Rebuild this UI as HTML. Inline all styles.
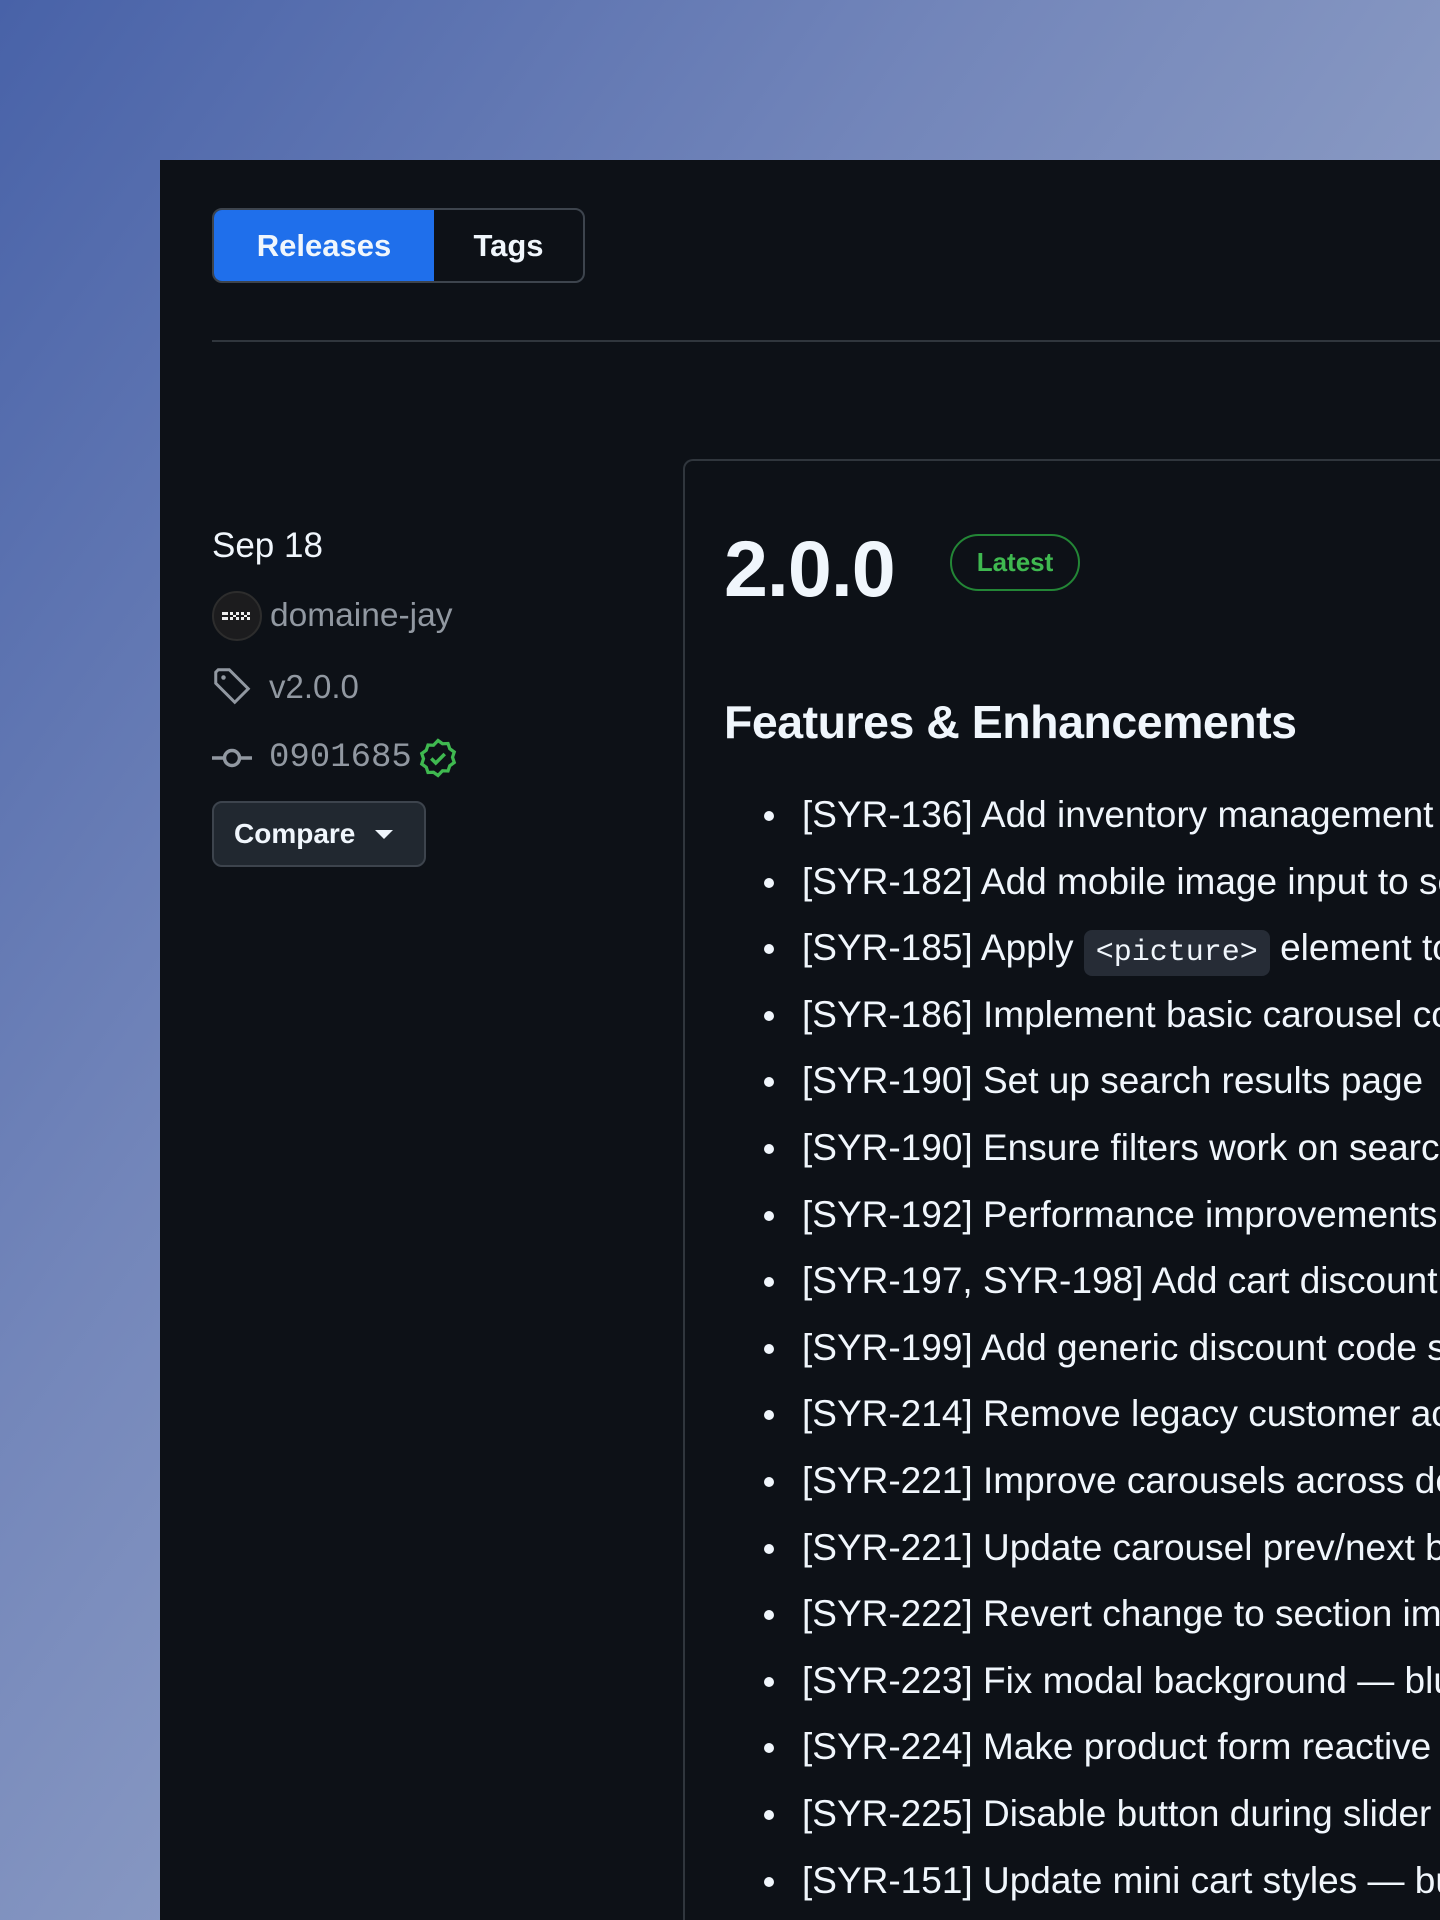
<!DOCTYPE html>
<html><head><meta charset="utf-8"><style>
*{margin:0;padding:0;box-sizing:border-box}
html,body{width:1440px;height:1920px;overflow:hidden}
body{background:linear-gradient(125deg,#4862a8 0%,#7386ba 35%,#8c9cc4 60%,#a8b6cc 100%);font-family:"Liberation Sans",sans-serif;position:relative}
.panel{position:absolute;left:160px;top:160px;width:1280px;height:1760px;background:#0d1117;overflow:hidden}
.tabs{position:absolute;left:52px;top:48px;height:75px;width:373px;border:2px solid #3d444d;border-radius:10px;overflow:hidden;display:flex}
.tabs div{display:flex;align-items:center;justify-content:center;font-weight:bold;font-size:31px;color:#f0f6fc}
.tabs .a{width:220px;background:#1f6feb}
.tabs .b{flex:1}
.hr{position:absolute;left:52px;top:180px;right:0;height:2px;background:#30363d}
.meta{position:absolute;left:52px;color:#f0f6fc}
.card{position:absolute;left:523px;top:299px;width:900px;height:1461px;border:2px solid #30363d;border-bottom:none;border-radius:10px 10px 0 0;overflow:hidden}
.t{position:absolute;left:39px;top:62px;font-size:79px;font-weight:bold;color:#f0f6fc;letter-spacing:-1px}
.badge{position:absolute;left:265px;top:73px;width:130px;height:57px;border:2px solid #238636;border-radius:30px;color:#3fb950;font-size:26px;font-weight:bold;display:flex;align-items:center;justify-content:center}
.h{position:absolute;left:39px;top:234px;font-size:46.5px;font-weight:bold;color:#f0f6fc;letter-spacing:-0.5px}
ul{position:absolute;left:39px;top:321px;list-style:none;white-space:nowrap}
li{height:66.6px;font-size:37px;color:#f0f6fc;padding-left:78px;position:relative;line-height:66px}
li:before{content:"";position:absolute;left:40px;top:29px;width:10px;height:10px;border-radius:50%;background:#f0f6fc}
code{font-family:"Liberation Mono",monospace;font-size:30px;background:#262c36;border-radius:8px;padding:6px 12px}
</style></head><body>
<div class="panel">
<div class="tabs"><div class="a">Releases</div><div class="b">Tags</div></div>
<div class="hr"></div>
<div class="meta" style="top:366px;font-size:35px">Sep 18</div>
<div class="meta" style="top:431px;display:flex;align-items:center;gap:8px;color:#9198a1;font-size:33.5px">
<div style="width:50px;height:50px;border-radius:50%;background:#1c1c1e;border:2px solid #2d2d2d;display:flex;align-items:center;justify-content:center"><svg width="30" height="12" viewBox="0 0 30 12"><path fill="#eee" d="M0 2h6v3H0zM0 7h6v3H0zM8 2h3v3H8zM11 5h3v2h-3zM14 2h3v3h-3zM14 7h3v3h-3zM8 7h3v3H8zM19 2h3v3h-3zM22 5h3v2h-3zM25 2h3v3h-3zM25 7h3v3h-3zM19 7h3v3h-3z"/></svg></div>domaine-jay</div>
<svg class="meta" style="top:506px" width="40" height="40" viewBox="0 0 16 16"><path fill="none" stroke="#9198a1" stroke-width="1.2" d="M1.5 2.5v4.4l7.6 7.6 5.4-5.4L6.9 1.5H2.5z"/><circle cx="4.6" cy="4.6" r="0.9" fill="#9198a1"/></svg>
<div class="meta" style="top:508px;left:109px;font-size:33px;color:#9198a1">v2.0.0</div>
<svg class="meta" style="top:578px" width="40" height="40" viewBox="0 0 16 16"><circle cx="8" cy="8" r="3" fill="none" stroke="#9198a1" stroke-width="1.4"/><path d="M0 8h5M11 8h5" stroke="#9198a1" stroke-width="1.4"/></svg>
<div class="meta" style="top:579px;left:109px;font-size:34px;color:#9198a1;font-family:'Liberation Mono',monospace">0901685</div>
<svg class="meta" style="top:578px;left:258px" width="40" height="40" viewBox="0 0 16 16"><path fill="none" stroke="#3fb950" stroke-width="1.3" d="M8 1l1.8 1.3 2.2-.1.7 2.1 1.8 1.3-.7 2.1.7 2.1-1.8 1.3-.7 2.1-2.2-.1L8 15l-1.8-1.3-2.2.1-.7-2.1-1.8-1.3.7-2.1-.7-2.1 1.8-1.3.7-2.1 2.2.1z"/><path fill="none" stroke="#3fb950" stroke-width="1.4" d="M5.3 8.2l1.8 1.8 3.6-3.6"/></svg>
<div class="meta" style="top:641px;width:214px;height:66px;background:#212830;border:2px solid #3d444d;border-radius:10px;display:flex;align-items:center;padding-left:20px;font-size:28px;font-weight:bold">Compare<span style="margin-left:20px;border-left:9px solid transparent;border-right:9px solid transparent;border-top:9px solid #f0f6fc"></span></div>
<div class="card">
<div class="t">2.0.0</div>
<div class="badge">Latest</div>
<div class="h">Features &amp; Enhancements</div>
<ul>
<li>[SYR-136] Add inventory management to product pages</li>
<li>[SYR-182] Add mobile image input to sections</li>
<li>[SYR-185] Apply <code>&lt;picture&gt;</code> element to images</li>
<li>[SYR-186] Implement basic carousel component</li>
<li>[SYR-190] Set up search results page</li>
<li>[SYR-190] Ensure filters work on search page</li>
<li>[SYR-192] Performance improvements</li>
<li>[SYR-197, SYR-198] Add cart discount codes</li>
<li>[SYR-199] Add generic discount code support</li>
<li>[SYR-214] Remove legacy customer account pages</li>
<li>[SYR-221] Improve carousels across devices</li>
<li>[SYR-221] Update carousel prev/next buttons</li>
<li>[SYR-222] Revert change to section importing</li>
<li>[SYR-223] Fix modal background — blur</li>
<li>[SYR-224] Make product form reactive</li>
<li>[SYR-225] Disable button during slider change</li>
<li>[SYR-151] Update mini cart styles — buttons</li>
</ul>
</div>
</div>
</body></html>
